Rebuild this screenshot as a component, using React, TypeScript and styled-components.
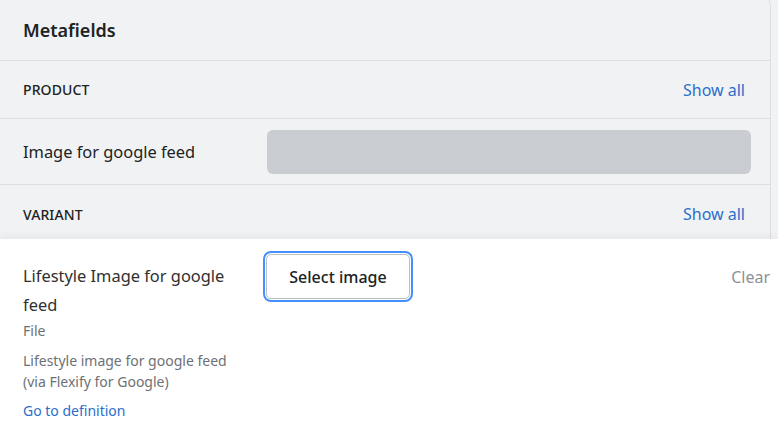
import styled, { createGlobalStyle } from "styled-components";

const GlobalStyle = createGlobalStyle`
  html, body {
    margin: 0;
    padding: 0;
    background: #f1f2f4;
    font-family: "Noto Sans", "Open Sans", sans-serif;
    color: #202223;
    overflow: hidden;
  }
`;

const Page = styled.div`
  width: 778px;
  height: 430px;
  display: flex;
  flex-direction: column;
  overflow: hidden;
`;

const Card = styled.section`
  width: 771px;
  margin-top: -4px;
  background: #f1f2f4;
  border-right: 1px solid #dcdee1;
  border-top: 1px solid #dcdee1;
  border-top-right-radius: 9px;
  box-sizing: border-box;
`;

const Header = styled.div`
  height: 64px;
  padding: 0 23px;
  display: flex;
  align-items: center;
  padding-top: 2px;
  box-sizing: border-box;
  border-bottom: 1px solid #dcdee1;
`;

const Title = styled.h2`
  margin: 0;
  font-size: 18px;
  font-weight: 600;
  color: #202223;
`;

const GroupHeader = styled.div<{ $h: number }>`
  height: ${(p) => p.$h}px;
  padding: 0 25px 0 23px;
  display: flex;
  align-items: center;
  justify-content: space-between;
  box-sizing: border-box;
  border-bottom: 1px solid #dcdee1;
  &:last-child {
    border-bottom: none;
    padding-top: 4px;
  }
`;

const GroupName = styled.span`
  font-size: 14px;
  font-weight: 500;
  letter-spacing: 0.1px;
  color: #202223;
`;

const Link = styled.a<{ $size?: number }>`
  color: #2c6ecb;
  text-decoration: none;
  font-size: ${(p) => p.$size ?? 16}px;
  cursor: pointer;
`;

const FieldRow = styled.div`
  height: 66px;
  display: grid;
  grid-template-columns: 244px 1fr;
  align-items: center;
  padding: 0 19px 0 23px;
  box-sizing: border-box;
  border-bottom: 1px solid #dcdee1;
`;

const FieldLabel = styled.span`
  font-size: 16.4px;
  color: #202223;
`;

const Placeholder = styled.div`
  height: 44px;
  border-radius: 6px;
  background: #c9ccd0;
`;

const ActivePanel = styled.div`
  flex: 1;
  background: #ffffff;
  box-shadow: 0 -3px 8px rgba(0, 0, 0, 0.05);
  display: grid;
  grid-template-columns: 243px 1fr auto;
  align-items: start;
  padding: 15px 8px 0 23px;
  position: relative;
`;

const LabelCol = styled.div`
  display: flex;
  flex-direction: column;
  padding-top: 7px;
  padding-right: 14px;
`;

const LabelText = styled.div`
  font-size: 16.4px;
  line-height: 29px;
  color: #303030;
`;

const Type = styled.div`
  font-size: 14px;
  color: #6d7175;
  line-height: 20px;
  margin-top: 2px;
`;

const Description = styled.div`
  font-size: 14px;
  color: #6d7175;
  line-height: 21px;
  margin-top: 9px;
`;

const DefinitionLink = styled(Link)`
  margin-top: 9px;
  line-height: 20px;
`;

const SelectButton = styled.button`
  justify-self: start;
  width: 144px;
  height: 45px;
  background: #ffffff;
  border: 1px solid #babfc3;
  border-radius: 5px;
  outline: 2px solid #458fff;
  outline-offset: 1px;
  font-family: inherit;
  font-size: 16px;
  font-weight: 500;
  color: #202223;
  cursor: pointer;
`;

const ClearButton = styled.button`
  background: none;
  border: none;
  padding: 0;
  height: 45px;
  font-family: inherit;
  font-size: 16px;
  color: #8c9196;
`;

export default function App() {
  return (
    <>
      <GlobalStyle />
      <Page>
        <Card>
          <Header>
            <Title>Metafields</Title>
          </Header>
          <GroupHeader $h={58}>
            <GroupName>PRODUCT</GroupName>
            <Link>Show all</Link>
          </GroupHeader>
          <FieldRow>
            <FieldLabel>Image for google feed</FieldLabel>
            <Placeholder />
          </FieldRow>
          <GroupHeader $h={54}>
            <GroupName>VARIANT</GroupName>
            <Link>Show all</Link>
          </GroupHeader>
        </Card>
        <ActivePanel>
          <LabelCol>
            <LabelText>Lifestyle Image for google feed</LabelText>
            <Type>File</Type>
            <Description>
              Lifestyle image for google feed
              <br />
              (via Flexify for Google)
            </Description>
            <DefinitionLink $size={14}>Go to definition</DefinitionLink>
          </LabelCol>
          <SelectButton>Select image</SelectButton>
          <ClearButton>Clear</ClearButton>
        </ActivePanel>
      </Page>
    </>
  );
}
